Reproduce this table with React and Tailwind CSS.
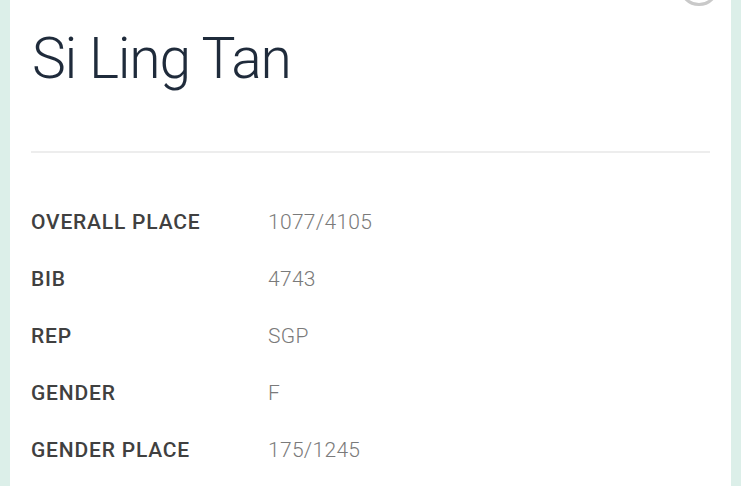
import React from 'react';

const rows = [
    { label: 'OVERALL PLACE', value: '1077/4105' },
    { label: 'BIB', value: '4743' },
    { label: 'REP', value: 'SGP' },
    { label: 'GENDER', value: 'F' },
    { label: 'GENDER PLACE', value: '175/1245' },
];

const App = () => {
    return (
        <div className="w-[741px] h-[486px] overflow-hidden bg-[#dcefe9] px-[10px]" style={{ fontFamily: 'Roboto, "Liberation Sans", sans-serif' }}>
            <div className="relative h-full bg-white px-[21px] pt-[26px]">
                {/* close button, cut off at the top */}
                <div className="absolute right-[12px] top-[-34px] w-[40px] h-[40px] rounded-full border-[3px] border-[#c9c9c9] bg-white"></div>

                <h1 className="text-[57px] font-light leading-[66px] tracking-[-1.2px] text-[#1f2b3b] pl-[1px]">Si Ling Tan</h1>

                <div className="mt-[59px] h-[2px] bg-[#ededed]"></div>

                <div className="pt-[57px] space-y-[31px]">
                    {rows.map(r => (
                        <div key={r.label} className="flex items-center h-[26px]">
                            <div className="w-[237px] text-[21px] font-medium text-[#404040] tracking-[0.8px]">{r.label}</div>
                            <div className="text-[21px] font-light text-[#7a7a7a] tracking-[0.3px]">{r.value}</div>
                        </div>
                    ))}
                </div>
            </div>
        </div>
    );
};

export default App;
